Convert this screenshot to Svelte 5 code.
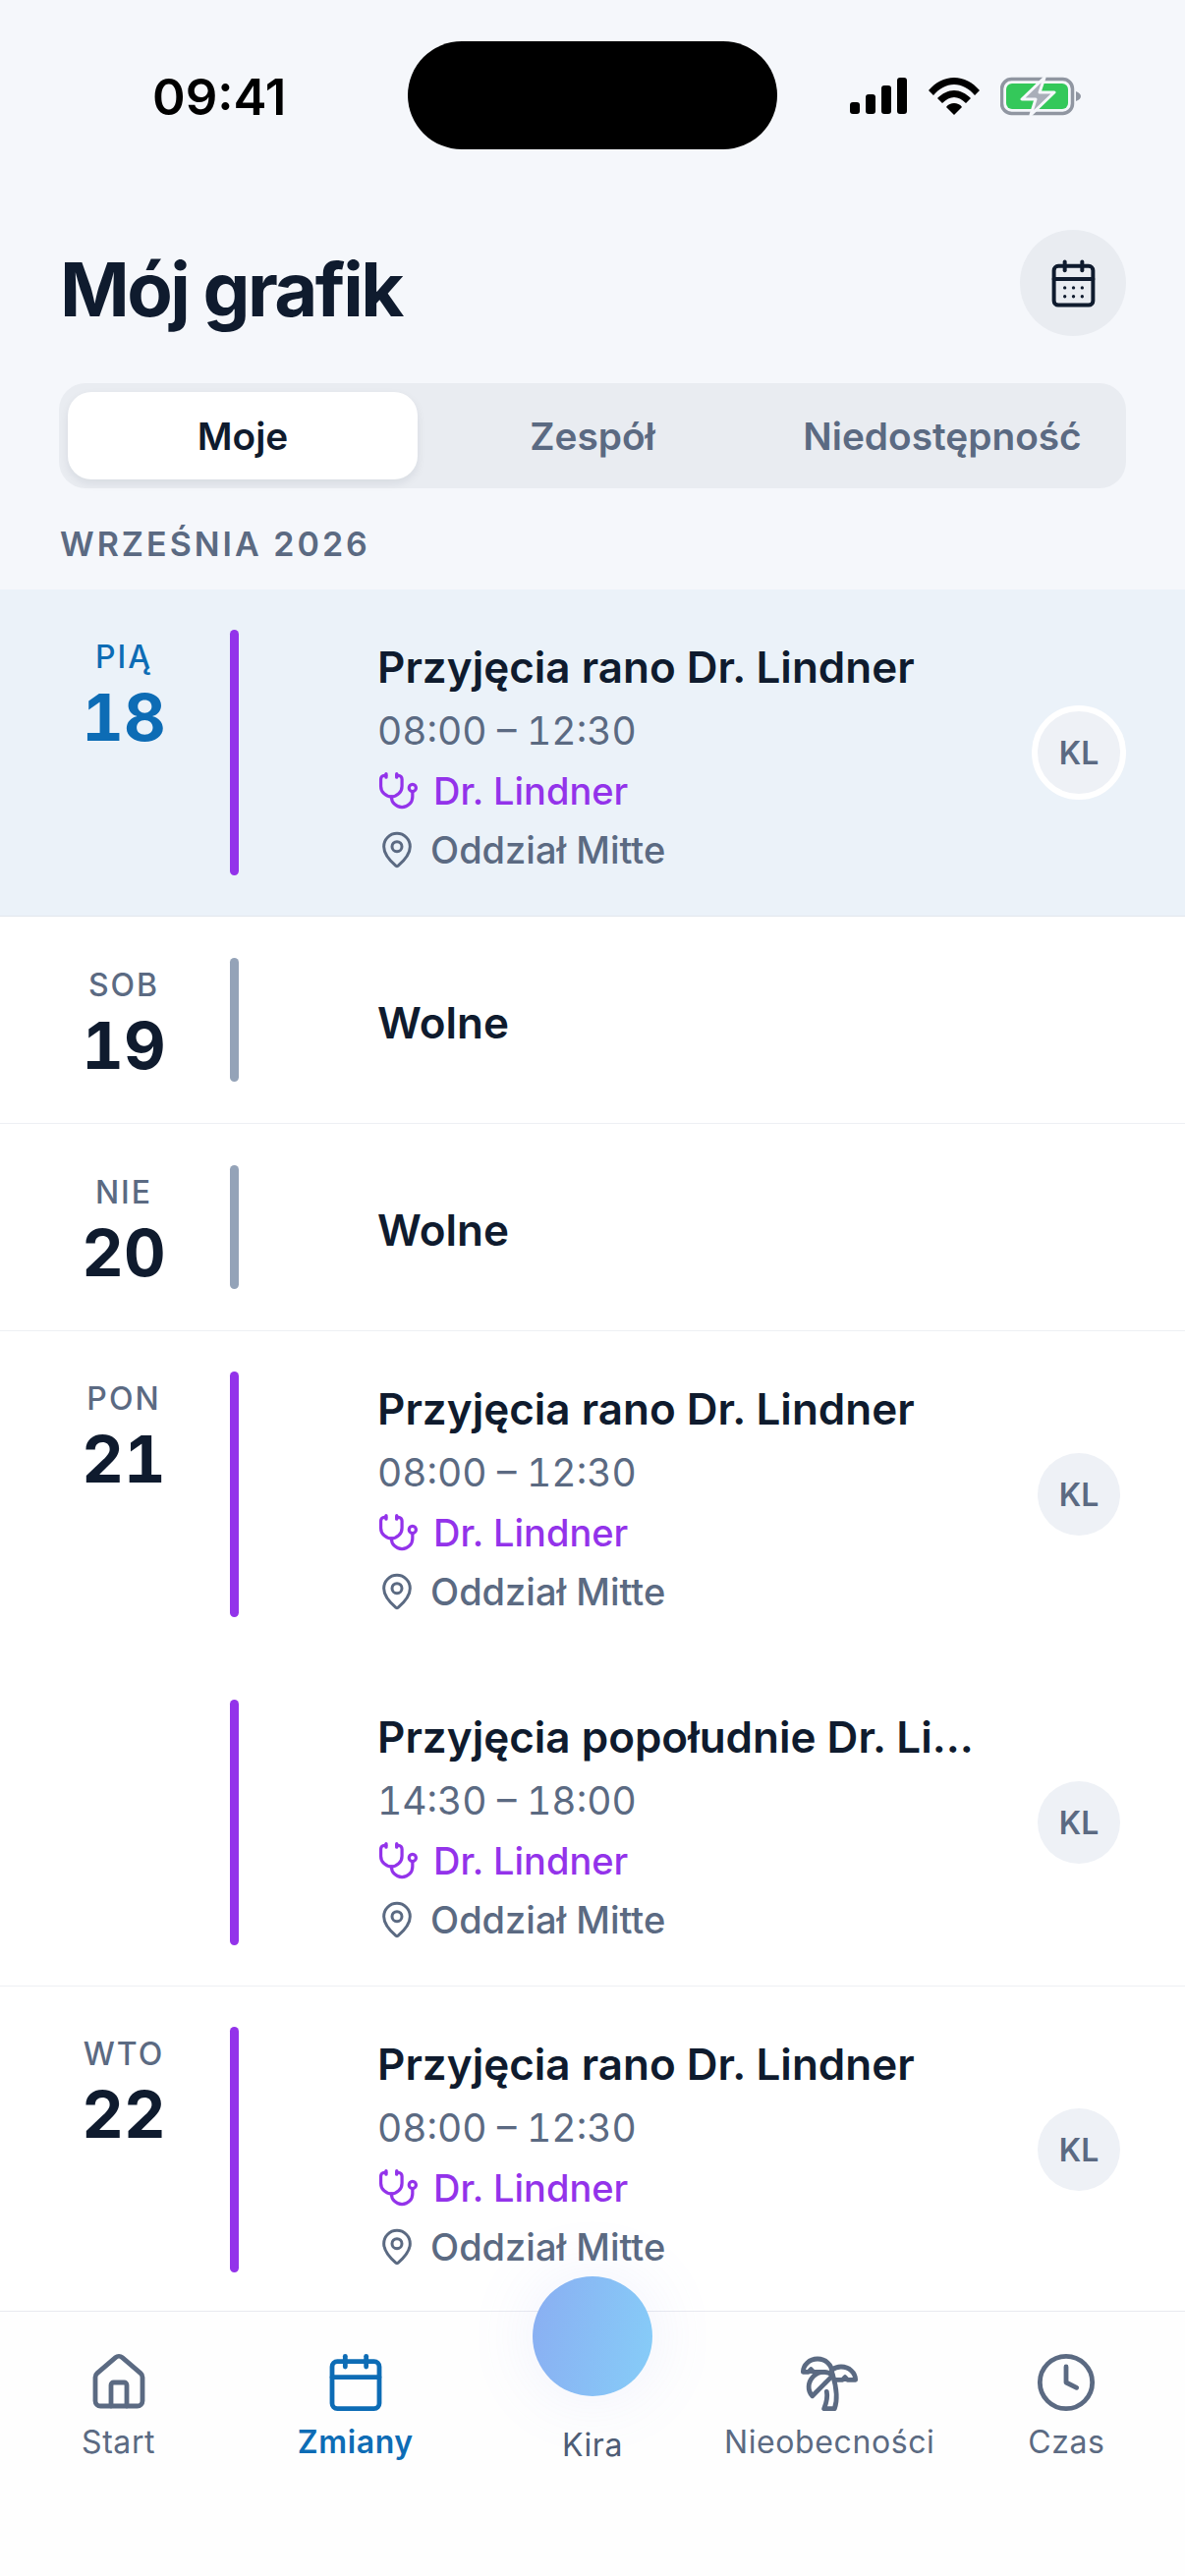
<script>
	const days = [
		{ name: 'PIĄ', num: 18, today: true, shifts: [{ title: 'Przyjęcia rano Dr. Lindner', time: '08:00 – 12:30' }] },
		{ name: 'SOB', num: 19, free: true, shifts: [] },
		{ name: 'NIE', num: 20, free: true, shifts: [] },
		{
			name: 'PON',
			num: 21,
			shifts: [
				{ title: 'Przyjęcia rano Dr. Lindner', time: '08:00 – 12:30' },
				{ title: 'Przyjęcia popołudnie Dr. Lindner', time: '14:30 – 18:00' }
			]
		},
		{ name: 'WTO', num: 22, shifts: [{ title: 'Przyjęcia rano Dr. Lindner', time: '08:00 – 12:30' }] }
	];
</script>

<div class="screen">
	<header class="status">
		<span class="clock">09:41</span>
		<div class="island"></div>
		<div class="status-icons">
			<svg class="signal" viewBox="0 0 58 37" fill="#000">
				<rect x="0" y="25" width="10" height="12" rx="3" />
				<rect x="16" y="17" width="10" height="20" rx="3" />
				<rect x="32" y="8" width="10" height="29" rx="3" />
				<rect x="48" y="0" width="10" height="37" rx="3" />
			</svg>
			<svg class="wifi" viewBox="0 0 52 38" fill="#000">
				<path d="M0 13C7 5 16 0 26 0s19 5 26 13l-5 5C41 11 34 7 26 7S11 11 5 18z" />
				<path d="M9 21c5-5 11-8 17-8s12 3 17 8l-5 5c-4-4-8-6-12-6s-8 2-12 6z" />
				<path d="M18 30c2-3 5-4 8-4s6 1 8 4l-8 8z" />
			</svg>
			<svg class="battery" viewBox="0 0 82 40">
				<rect x="1.5" y="2.5" width="72" height="35" rx="10" fill="none" stroke="#9096a1" stroke-width="3.5" />
				<rect x="6" y="7" width="63" height="26" rx="6" fill="#34c85a" />
				<path d="M77 15c3 1 5 3 5 5s-2 4-5 5z" fill="#9096a1" />
				<path d="M45 1 22 23h14l-5 16 24-23H40z" fill="#a9aeb9" stroke="#f5f7fb" stroke-width="3" stroke-linejoin="round" />
			</svg>
		</div>
	</header>

	<div class="title-row">
		<h1>Mój grafik</h1>
		<button class="cal-btn" aria-label="Kalendarz">
			<svg viewBox="0 0 24 24" class="stroke">
				<path d="M8 2v4" /><path d="M16 2v4" />
				<rect width="18" height="18" x="3" y="4" rx="2" />
				<path d="M3 10h18" />
				<g class="dots">
					<path d="M8 14h.01" /><path d="M12 14h.01" /><path d="M16 14h.01" />
					<path d="M8 18h.01" /><path d="M12 18h.01" /><path d="M16 18h.01" />
				</g>
			</svg>
		</button>
	</div>

	<div class="tabs">
		<div class="tab active">Moje</div>
		<div class="tab">Zespół</div>
		<div class="tab">Niedostępność</div>
	</div>

	<div class="month">WRZEŚNIA 2026</div>

	<main class="list">
		{#each days as day}
			<section class="day" class:today={day.today}>
				{#if day.free}
					<div class="row free">
						<div class="date">
							<span class="dname">{day.name}</span>
							<span class="dnum">{day.num}</span>
						</div>
						<div class="bar grey"></div>
						<div class="body"><div class="title">Wolne</div></div>
					</div>
				{:else}
					{#each day.shifts as shift, i}
						<div class="row">
							<div class="date">
								{#if i === 0}
									<span class="dname">{day.name}</span>
									<span class="dnum">{day.num}</span>
								{/if}
							</div>
							<div class="bar"></div>
							<div class="body">
								<div class="title">{shift.title}</div>
								<div class="time">{shift.time}</div>
								<div class="doc">
									<svg viewBox="0 0 24 24" class="stroke steth">
										<path d="M11 2v2" /><path d="M5 2v2" />
										<path d="M5 3H4a2 2 0 0 0-2 2v4a6 6 0 0 0 12 0V5a2 2 0 0 0-2-2h-1" />
										<path d="M8 15a6 6 0 0 0 12 0v-3" />
										<circle cx="20" cy="10" r="2" />
									</svg>
									Dr. Lindner
								</div>
								<div class="place">
									<svg viewBox="0 0 24 24" class="stroke pin">
										<path d="M20 10c0 4.993-5.539 10.193-7.399 11.799a1 1 0 0 1-1.202 0C9.539 20.193 4 14.993 4 10a8 8 0 0 1 16 0" />
										<circle cx="12" cy="10" r="3" />
									</svg>
									Oddział Mitte
								</div>
							</div>
							<div class="avatar">KL</div>
						</div>
					{/each}
				{/if}
			</section>
		{/each}
	</main>

	<nav class="nav">
		<div class="item">
			<svg viewBox="0 0 24 24" class="stroke">
				<path d="M15 21v-8a1 1 0 0 0-1-1h-4a1 1 0 0 0-1 1v8" />
				<path d="M3 10a2 2 0 0 1 .709-1.528l7-5.999a2 2 0 0 1 2.582 0l7 5.999A2 2 0 0 1 21 10v9a2 2 0 0 1-2 2H5a2 2 0 0 1-2-2z" />
			</svg>
			<span>Start</span>
		</div>
		<div class="item on">
			<svg viewBox="0 0 24 24" class="stroke">
				<path d="M8 2v4" /><path d="M16 2v4" />
				<rect width="18" height="18" x="3" y="4" rx="2" />
				<path d="M3 10h18" />
			</svg>
			<span>Zmiany</span>
		</div>
		<div class="item kira">
			<div class="orb"></div>
			<span>Kira</span>
		</div>
		<div class="item">
			<svg viewBox="0 0 24 24" class="stroke">
				<path d="M13 8c0-2.76-2.46-5-5.5-5S2 5.24 2 8h2l1-1 1 1h4" />
				<path d="M13 7.14A5.82 5.82 0 0 1 16.5 6c3.04 0 5.5 2.24 5.5 5h-3l-1-1-1 1h-3" />
				<path d="M5.89 9.71c-2.15 2.15-2.3 5.47-.35 7.43l4.24-4.25.7-.7.71-.71 2.12-2.12c-1.95-1.96-5.27-1.8-7.42.35" />
				<path d="M11 15.5c.5 2.5-.17 4.5-1 6.5h4c2-5.5-.5-12-1-14" />
			</svg>
			<span>Nieobecności</span>
		</div>
		<div class="item">
			<svg viewBox="0 0 24 24" class="stroke">
				<circle cx="12" cy="12" r="10" />
				<path d="M12 6v6l4 2" />
			</svg>
			<span>Czas</span>
		</div>
	</nav>
</div>

<style>
	:global(body) {
		margin: 0;
		background: #f5f7fb;
	}

	.screen {
		width: 1206px;
		height: 2622px;
		display: flex;
		flex-direction: column;
		overflow: hidden;
		background: #f5f7fb;
		font-family: Inter, 'Noto Sans', sans-serif;
		color: #0f1b2e;
	}

	.stroke {
		fill: none;
		stroke: currentColor;
		stroke-width: 1.8;
		stroke-linecap: round;
		stroke-linejoin: round;
	}

	/* status bar */
	.status {
		position: relative;
		height: 234px;
		flex: none;
	}
	.clock {
		position: absolute;
		left: 155px;
		top: 70px;
		font-size: 51px;
		line-height: 58px;
		font-weight: 600;
		color: #000;
	}
	.island {
		position: absolute;
		left: 415px;
		top: 42px;
		width: 376px;
		height: 110px;
		border-radius: 55px;
		background: #000;
	}
	.status-icons {
		position: absolute;
		left: 865px;
		top: 78px;
		display: flex;
		align-items: flex-start;
	}
	.signal {
		width: 58px;
		height: 37px;
		margin-top: 1px;
	}
	.wifi {
		width: 52px;
		height: 38px;
		margin: 1px 0 0 22px;
	}
	.battery {
		width: 82px;
		height: 40px;
		margin-left: 21px;
	}

	/* title */
	.title-row {
		display: flex;
		justify-content: space-between;
		align-items: center;
		padding: 0 60px 0 61px;
		height: 108px;
		flex: none;
	}
	h1 {
		margin: 0;
		font-size: 76px;
		font-weight: 700;
		letter-spacing: -2.6px;
		line-height: 88px;
		margin-top: 12px;
	}
	.cal-btn {
		width: 108px;
		height: 108px;
		border: 0;
		padding: 0;
		border-radius: 50%;
		background: #e9ecf1;
		color: #0f1b2e;
		display: flex;
		align-items: center;
		justify-content: center;
	}
	.cal-btn svg {
		width: 53px;
		height: 53px;
	}
	.dots {
		stroke-width: 1.5;
	}

	/* tabs */
	.tabs {
		margin: 48px 60px 0;
		height: 107px;
		box-sizing: border-box;
		padding: 9px;
		border-radius: 27px;
		background: #e9ecf1;
		display: grid;
		grid-template-columns: 356px 356px 356px;
		flex: none;
	}
	.tab {
		display: flex;
		align-items: center;
		justify-content: center;
		font-size: 38.8px;
		font-weight: 600;
		color: #5b6a82;
		border-radius: 24px;
	}
	.tab.active {
		background: #fff;
		color: #0f1b2e;
		box-shadow: 0 4px 10px rgba(15, 27, 46, 0.08);
	}

	.month {
		margin: 38px 0 0 61px;
		height: 65px;
		font-size: 34px;
		line-height: 38px;
		font-weight: 600;
		letter-spacing: 3px;
		color: #5b6a82;
		flex: none;
	}

	/* list */
	.list {
		flex: 1;
		min-height: 0;
		overflow: hidden;
		background: #fff;
	}
	.day {
		border-bottom: 1px solid #eef0f4;
	}
	.day.today {
		background: #ebf2f9;
		border-bottom-color: #e2e6ec;
	}
	.row {
		display: flex;
		align-items: stretch;
		padding: 41px 0;
	}
	.row + .row {
		padding-top: 43px;
	}
	.row.free {
		padding: 42px 0;
	}
	.date {
		width: 234px;
		flex: none;
		padding-left: 18px;
		box-sizing: border-box;
		display: flex;
		flex-direction: column;
		align-items: center;
		margin-top: 9px;
		font-variant-numeric: tabular-nums;
	}
	.dname {
		font-size: 32px;
		line-height: 38px;
		font-weight: 500;
		letter-spacing: 2px;
		color: #5b6a82;
	}
	.dnum {
		font-size: 66px;
		line-height: 72px;
		font-weight: 700;
		margin-top: 6px;
	}
	.today .dname,
	.today .dnum {
		color: #0d6cb5;
	}
	.bar {
		width: 9px;
		flex: none;
		border-radius: 5px;
		background: #9333ea;
	}
	.bar.grey {
		background: #94a3b8;
	}
	.free .bar {
		height: 126px;
	}
	.free .body {
		height: auto;
		padding-top: 0;
		align-self: center;
		margin-top: 6px;
	}
	.body {
		margin-left: 141px;
		width: 611px;
		height: 250px;
		box-sizing: border-box;
		padding-top: 6px;
		flex: none;
	}
	.title {
		font-size: 44px;
		line-height: 64px;
		font-weight: 600;
		white-space: nowrap;
		overflow: hidden;
		text-overflow: ellipsis;
	}
	.time {
		font-size: 39px;
		line-height: 64px;
		padding-top: 1px;
		margin-bottom: -1px;
		color: #5b6a82;
		font-variant-numeric: tabular-nums;
	}
	.doc,
	.place {
		display: flex;
		align-items: center;
		gap: 14px;
		font-size: 38px;
		line-height: 60px;
		font-weight: 500;
	}
	.doc {
		color: #9333ea;
	}
	.place {
		color: #5b6a82;
	}
	.steth {
		width: 43px;
		height: 43px;
	}
	.pin {
		width: 40px;
		height: 40px;
	}
	.avatar {
		align-self: center;
		margin-left: 61px;
		width: 84px;
		height: 84px;
		flex: none;
		border-radius: 50%;
		background: #eef1f6;
		color: #5b6a82;
		display: flex;
		align-items: center;
		justify-content: center;
		font-size: 32px;
		font-weight: 600;
	}
	.today .avatar {
		margin-left: 55px;
		width: 96px;
		height: 96px;
		box-sizing: border-box;
		border: 6px solid #fff;
	}

	/* bottom nav */
	.nav {
		position: relative;
		height: 270px;
		flex: none;
		box-sizing: border-box;
		border-top: 1px solid #e8eaf0;
		background: #fefefe;
		display: grid;
		grid-template-columns: repeat(5, 1fr);
	}
	.item {
		display: flex;
		flex-direction: column;
		align-items: center;
		padding-top: 40px;
		color: #5b6a82;
	}
	.item svg {
		width: 64px;
		height: 64px;
	}
	.item span {
		margin-top: 9px;
		font-size: 32px;
		line-height: 40px;
		font-weight: 400;
		letter-spacing: 0.6px;
		white-space: nowrap;
	}
	.item.on {
		color: #0d6cb5;
	}
	.item.on span {
		font-weight: 600;
	}
	.kira span {
		margin-top: 76px;
		color: #4e5d75;
	}
	.orb {
		position: absolute;
		top: -36px;
		left: 542px;
		width: 122px;
		height: 122px;
		border-radius: 50%;
		background: linear-gradient(100deg, #8aaef2 0%, #86cdf8 100%);
		box-shadow: 0 0 70px rgba(120, 140, 240, 0.12);
	}
</style>
